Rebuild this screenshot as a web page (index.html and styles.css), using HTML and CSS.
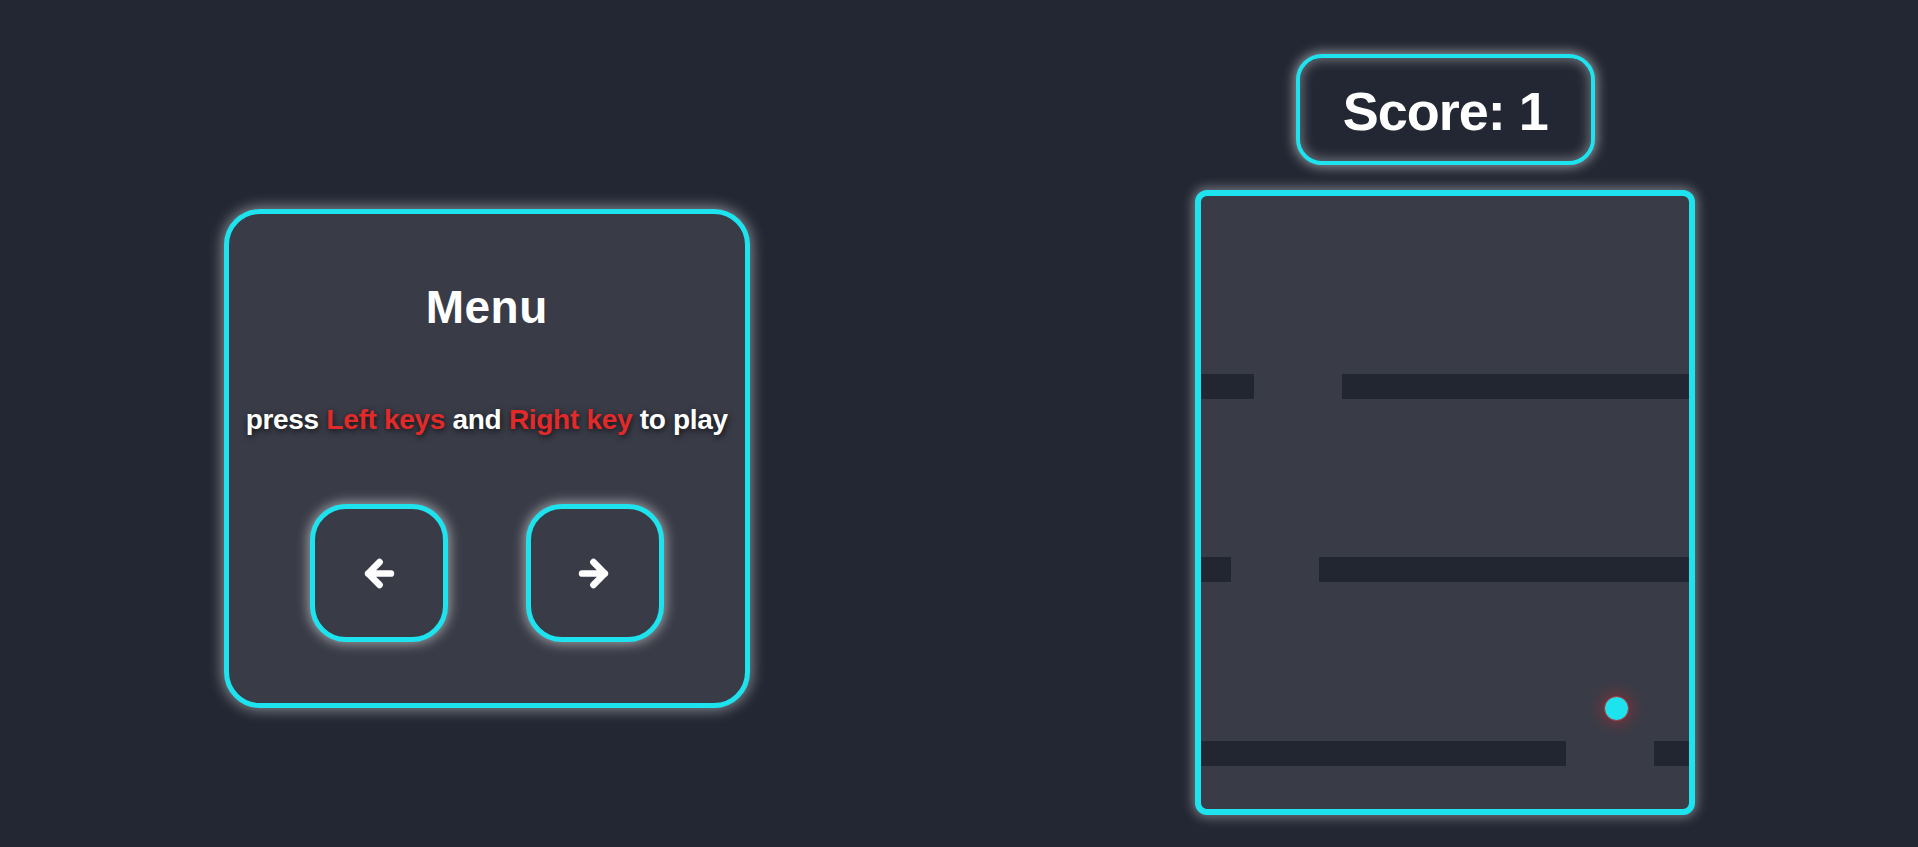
FILE: index.html
```html
<!DOCTYPE html>
<html lang="en">
<head>
<meta charset="utf-8">
<title>Game</title>
<link rel="stylesheet" href="styles.css">
</head>
<body>
<main class="page">
  <section class="menu">
    <h1 class="menu-title">Menu</h1>
    <p class="menu-text">press <span class="hl">Left keys</span> and <span class="hl">Right key</span> to play</p>
    <div class="keys">
      <button class="key" type="button" aria-label="Left">
        <svg class="arrow" viewBox="0 0 32 32" width="32" height="32"><path d="M17 5 L6 16 L17 27 M6 16 H28" fill="none" stroke="#fff" stroke-width="6.5" stroke-linecap="round" stroke-linejoin="round"/></svg>
      </button>
      <button class="key" type="button" aria-label="Right">
        <svg class="arrow" viewBox="0 0 32 32" width="32" height="32"><path d="M15 5 L26 16 L15 27 M26 16 H4" fill="none" stroke="#fff" stroke-width="6.5" stroke-linecap="round" stroke-linejoin="round"/></svg>
      </button>
    </div>
  </section>
  <section class="game">
    <div class="score">Score: 1</div>
    <div class="board">
      <div class="bar-row" style="top:178px"><div class="seg" style="width:53px"></div><div class="seg seg-fill"></div></div>
      <div class="bar-row" style="top:361px"><div class="seg" style="width:30px"></div><div class="seg seg-fill"></div></div>
      <div class="bar-row" style="top:545px"><div class="seg" style="width:365px"></div><div class="seg seg-fill"></div></div>
      <div class="ball" style="left:403px; top:500px"></div>
    </div>
  </section>
</main>
</body>
</html>
```
FILE: styles.css
```css
* { box-sizing: border-box; }
html, body {
  margin: 0;
  padding: 0;
  background: #222733;
  height: 100%;
  overflow: hidden;
}
body {
  font-family: "Liberation Sans", Arial, sans-serif;
  color: #fff;
}
.page {
  display: flex;
  justify-content: space-around;
  align-items: flex-start;
  padding-top: 54px;
  width: 100%;
}
.menu {
  width: 526px;
  height: 499px;
  margin-top: 155px;
  margin-left: 1px;
  border: 5px solid #1de3ee;
  border-radius: 36px;
  background: #393c47;
  box-shadow: 0 0 14px 2px rgba(255, 255, 255, 0.45);
  display: flex;
  flex-direction: column;
  align-items: center;
  padding-top: 68px;
}
.menu-title {
  margin: 0;
  font-size: 46px;
  line-height: 50px;
  font-weight: 700;
  letter-spacing: 0.5px;
}
.menu-text {
  margin: 71px 0 0;
  font-size: 28px;
  line-height: 34px;
  font-weight: 700;
  letter-spacing: -0.3px;
  white-space: nowrap;
  text-shadow: 1px 2px 6px rgba(0, 0, 0, 0.75);
}
.hl { color: #e22a2a; }
.keys {
  margin-top: 67px;
  display: flex;
  gap: 78px;
}
.key {
  width: 138px;
  height: 138px;
  border: 5px solid #1de3ee;
  border-radius: 36px;
  background: #393c47;
  box-shadow: 0 0 12px 2px rgba(255, 255, 255, 0.5);
  display: flex;
  align-items: center;
  justify-content: center;
  padding: 0;
}
.arrow { display: block; width: 33px; height: 33px; }
.game {
  display: flex;
  flex-direction: column;
  align-items: center;
  gap: 25px;
}
.score {
  width: 299px;
  height: 111px;
  border: 4px solid #1de3ee;
  border-radius: 26px;
  background: #222733;
  box-shadow: 0 0 12px 2px rgba(255, 255, 255, 0.5), inset 0 0 12px 2px rgba(255, 255, 255, 0.35);
  display: flex;
  align-items: center;
  justify-content: center;
  font-size: 54px;
  font-weight: 700;
  letter-spacing: -1px;
  padding-top: 2px;
}
.board {
  position: relative;
  width: 500px;
  height: 625px;
  border: 6px solid #1de3ee;
  border-radius: 12px;
  background: #393c47;
  box-shadow: 0 0 12px 2px rgba(255, 255, 255, 0.4);
  overflow: hidden;
}
.bar-row {
  position: absolute;
  left: 0;
  right: 0;
  height: 25px;
  display: flex;
  gap: 88px;
}
.seg {
  height: 100%;
  background: #212631;
  flex: none;
}
.seg-fill { flex: 1; }
.ball {
  position: absolute;
  width: 25px;
  height: 25px;
  border-radius: 50%;
  background: #1de3ee;
  border: 1px solid #b0323a;
  box-shadow: 0 0 14px 4px rgba(220, 40, 40, 0.35);
}
```
